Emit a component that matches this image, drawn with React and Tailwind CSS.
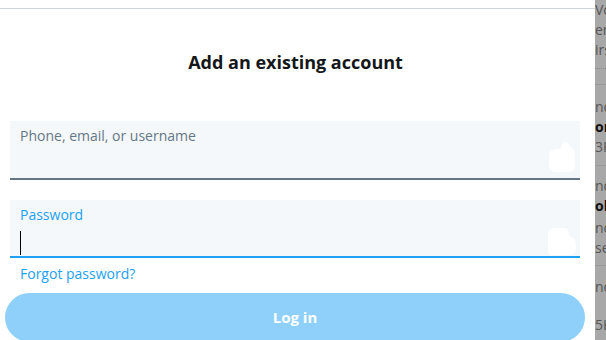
import React from "react";

const font = { fontFamily: '"Open Sans", "Noto Sans", Arial, sans-serif' };

const Blob = ({ variant }) =>
  variant === "a" ? (
    <svg className="absolute right-[4px] top-[21px]" width="28" height="31" viewBox="0 0 28 31">
      <path d="M1 14 C1 9 5 7 10 7 L13 7 C13 3 15 0 18 0 C21 0 22 3 22 5 C25 6 27 9 27 14 L27 23 C27 28 24 30 20 30 L8 30 C4 30 1 27 1 23 Z" fill="#fff" />
    </svg>
  ) : (
    <svg className="absolute right-[3px] top-[28px]" width="30" height="28" viewBox="0 0 30 28">
      <path d="M1 6 C1 2 4 0 8 0 L17 0 C21 0 22 3 22 6 C22 8 24 9 26 10 C29 12 29 16 29 20 C29 25 26 27 22 27 L6 27 C2 27 1 24 1 20 Z" fill="#fff" />
    </svg>
  );

export default function App() {
  return (
    <div className="flex w-[606px] h-[340px] overflow-hidden bg-white" style={font}>
      <div className="w-[595px] shrink-0 flex flex-col">
        <div className="mt-[8px] border-t border-[#ccd6dd]" />
        <h1 className="pt-[41px] text-center text-[18px] leading-[24px] font-bold text-[#14171a] pr-[4px]">
          Add an existing account
        </h1>

        <div className="relative ml-[10px] mr-[15px] mt-[47px] h-[59px] shrink-0 bg-[#f5f8fa] border-b-2 border-[#657786] px-[10px] pt-[5px]">
          <div className="text-[14px] leading-[20px] text-[#657786]">Phone, email, or username</div>
          <Blob variant="a" />
        </div>

        <div className="relative ml-[10px] mr-[15px] mt-[20px] h-[58px] shrink-0 bg-[#f5f8fa] border-b-2 border-[#1da1f2] px-[10px] pt-[5px]">
          <div className="text-[14px] leading-[20px] text-[#1da1f2]">Password</div>
          <div className="mt-[6px] w-[1px] h-[24px] bg-black" />
          <Blob variant="b" />
        </div>

        <a className="block mx-[20px] mt-[6px] text-[14px] leading-[20px] text-[#1da1f2]">Forgot password?</a>

        <button className="ml-[5px] mr-[10px] mt-[9px] h-[49px] shrink-0 rounded-full bg-[#8ed0f9] text-white text-[15px] font-bold">
          Log in
        </button>
      </div>

      <div className="flex-1 bg-[#a8a8a8] text-[14px] leading-[20px] text-[#555] whitespace-nowrap overflow-hidden flex flex-col">
        <div className="h-[20px] shrink-0">Vo</div>
        <div className="h-[20px] shrink-0">er</div>
        <div className="h-[18px] shrink-0">irs</div>
        <div className="mt-[10px] border-t border-dotted border-[#888]" />
        <div className="mt-[15px] border-t border-[#999]" />
        <div className="mt-[12px] h-[20px] shrink-0">nd</div>
        <div className="h-[20px] shrink-0 font-bold text-[#111]">or</div>
        <div className="h-[20px] shrink-0">3K</div>
        <div className="mt-[8px] border-t border-[#999]" />
        <div className="mt-[10px] h-[20px] shrink-0">nd</div>
        <div className="h-[22px] shrink-0 font-bold text-[#111]">ol</div>
        <div className="h-[20px] shrink-0">nc</div>
        <div className="h-[20px] shrink-0">se</div>
        <div className="mt-[7px] border-t border-[#999]" />
        <div className="mt-[11px] h-[20px] shrink-0">nd</div>
        <div className="mt-[18px] h-[20px] shrink-0">5K</div>
      </div>
    </div>
  );
}
